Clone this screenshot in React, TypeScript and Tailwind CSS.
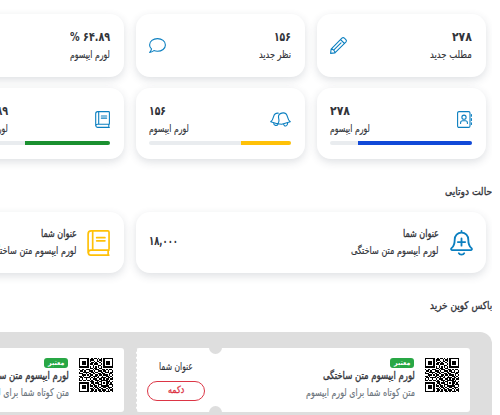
import { useLayoutEffect, useRef, useState, type ReactNode } from 'react';

type TextProps = { children: string; w: number; className: string; left?: boolean };

// A line of text condensed or widened to a known measure.
function Line({ children, w, className, left }: TextProps) {
  const ref = useRef<HTMLSpanElement>(null);
  const [scale, setScale] = useState(1);
  useLayoutEffect(() => {
    if (ref.current) setScale(w / ref.current.offsetWidth);
  }, [w]);
  return (
    <div className={`flex whitespace-nowrap ${left ? 'justify-end' : 'justify-start'} ${className}`} style={{ width: w }}>
      <span
        ref={ref}
        className={`shrink-0 ${left ? 'origin-left' : 'origin-right'}`}
        style={{ transform: `scaleX(${scale})` }}
      >
        {children}
      </span>
    </div>
  );
}

function Svg({ box, className, sw, children }: { box: string; className: string; sw: number; children: ReactNode }) {
  return (
    <svg viewBox={box} className={`shrink-0 ${className}`} fill="none" stroke="currentColor" strokeWidth={sw} strokeLinecap="round" strokeLinejoin="round">
      {children}
    </svg>
  );
}

const Pencil = () => (
  <Svg box="0 0 17 17" className="w-[17px] h-[17px]" sw={1.1}>
    <path d="M.6 16.400l.5-4.200L11.900 1.200a1.800 1.800 0 0 1 2.500 0l1.400 1.400a1.800 1.800 0 0 1 0 2.500L4.900 15.900zM10.600 2.600l3.900 3.900M1.100 12.200c1.800-.3 3.900 1.700 3.800 3.700M4.400 12.400l6.600-6.500" />
  </Svg>
);
const Comment = () => (
  <Svg box="0 0 17 15" className="w-[17px] h-[15px]" sw={1.1}>
    <path d="M8.500.6c4.400 0 7.900 2.700 7.900 6.300s-3.500 6.400-7.900 6.400c-1.300 0-2.500-.2-3.600-.7-1.300 1-2.700 1.700-4.200 1.800 1-1 1.600-2.200 1.800-3.500C1.300 9.800.6 8.400.6 6.900.6 3.300 4.100.6 8.500.6z" />
  </Svg>
);
const Contacts = () => (
  <Svg box="0 0 15 17" className="w-[15px] h-[17px]" sw={1.1}>
    <rect x=".6" y=".6" width="12.400" height="15.800" rx="1.400" />
    <circle cx="7" cy="6.200" r="2.100" />
    <path d="M3.600 12.500v-.8c0-1.200 1-2 2.100-2h2.600c1.100 0 2.100.8 2.100 2v.8M14.400 3.500v1.800M14.400 7.600v1.800M14.400 11.700v1.800" />
  </Svg>
);
const Bells = () => (
  <Svg box="0 0 21 15" className="w-[21px] h-[15px]" sw={1.1}>
    <path d="M8 12L.7 9.800C2.600 8.300 3 6.900 3.500 4.800 4.200 2.200 5.800.9 8.200 1.100M3.500 10.800c.2 2.900 3.600 3.600 4.500 1.200M11.700 12.200l8.600-2.400c-1.900-1.500-2.300-2.900-2.800-5C16.800 2.100 14.500.5 11.800 1.100 9.200 1.700 8.100 3.300 8.600 5.900c.3 2.100.9 3.200-.2 4.900-.3.400-.6.700-.9 1l4.200.4M13.600 12.200c.6 2.900 4.200 2.300 4-1.300" />
  </Svg>
);
const Book = ({ big }: { big?: boolean }) => (
  <Svg box="0 0 15 17" className={big ? 'w-[23px] h-[26px]' : 'w-[15px] h-[17px]'} sw={1.1}>
    <path d="M14.300 13.200H2.500a1.600 1.600 0 0 0 0 3.200h11.800M13.800 13.200v3.200M.7 14.800V2.700C.7 1.500 1.500.6 2.700.6h10.900c.4 0 .8.3.8.8v11.100c0 .4-.3.7-.8.7M3.700.6v12.600M6.300 5h5.400M6.300 7.100h5.400" />
  </Svg>
);
const BellPlus = () => (
  <Svg box="0 0 24 27" className="w-[23px] h-[26px]" sw={1.900}>
    <path d="M12 .9v1.700M12 2.700c-4.200 0-7.100 3.100-7.100 7.300 0 5-1 6.900-3.300 8.900-.9.900-.4 2.100.8 2.100h19.200c1.200 0 1.700-1.200.8-2.100-2.300-2-3.300-3.900-3.300-8.900 0-4.200-2.900-7.300-7.100-7.300zM12 8.700v7.600M8.200 12.500h7.600M9.200 24.200c.7 1.800 4.900 1.800 5.600 0" />
  </Svg>
);

const qrRows = [
  '1111111001011010101111111',
  '1000001011100101101000001',
  '1011101010010110101011101',
  '1011101001101001001011101',
  '1011101011011100101011101',
  '1000001000100011001000001',
  '1111111010101010101111111',
  '0000000011011001100000000',
  '1011011100101110011010110',
  '0110100111010011101101001',
  '1001111001101100110111011',
  '1110010110110011011000110',
  '0011101011001101101110101',
  '1101000110111010010011010',
  '0110111101010110111101101',
  '1010010010111001101011011',
  '1101101101001110111110100',
  '0000000011100101100011101',
  '1111111001101110101011010',
  '1000001010110011100010111',
  '1011101011011010111111001',
  '1011101000101101001101110',
  '1011101011010110110010101',
  '1000001001101011011101011',
  '1111111011011001101011101',
];
const qrPath = qrRows.map((r, y) => r.split('').map((c, x) => (c === '1' ? `M${x} ${y}h1v1h-1z` : '')).join('')).join('');

const card = 'shrink-0 rounded-[14px] bg-white shadow-[0_3px_9px_rgba(50,60,80,0.16)]';
const num = 'h-[18px] text-[12.5px] leading-[18px] font-bold';
const label = 'h-[17px] text-[10.5px] leading-[16px] [-webkit-text-stroke:0.15px_currentColor]';
const medium = '[-webkit-text-stroke:0.35px_currentColor]';

function Stat({ value, vw, text, tw, icon }: { value: string; vw: number; text: string; tw: number; icon: ReactNode }) {
  return (
    <div className={`${card} w-[169px] h-[63px] pl-[13px] pr-[14px] flex items-center justify-between`}>
      <div>
        <Line w={vw} className={num}>{value}</Line>
        <Line w={tw} className={label}>{text}</Line>
      </div>
      <div className="text-[#0b7fc0]">{icon}</div>
    </div>
  );
}

function Progress({ value, vw, icon, fill }: { value: string; vw: number; icon: ReactNode; fill: string }) {
  return (
    <div className={`${card} w-[169px] h-[71px] pt-[12px] pl-[13px] pr-[14px]`}>
      <div className="flex items-center justify-between h-[39px]">
        <div className="text-[#0b7fc0]">{icon}</div>
        <div className="flex flex-col items-end">
          <Line left w={vw} className={num}>{value}</Line>
          <Line left w={40} className={label}>لورم ایپسوم</Line>
        </div>
      </div>
      <div className="mt-[2px] h-[4px] rounded-full overflow-hidden bg-[#e9ecef]">
        <div className={`h-full ${fill}`} />
      </div>
    </div>
  );
}

function Wide({ icon, value }: { icon: ReactNode; value: string }) {
  return (
    <div className={`${card} w-[350px] h-[61px] pl-[13px] pr-[13px] flex items-center`}>
      {icon}
      <div className="mr-[10px] pb-[3px]">
        <Line w={36} className={`h-[18px] text-[10.5px] leading-[18px] ${medium}`}>عنوان شما</Line>
        <Line w={88} className="h-[17px] text-[10.5px] leading-[17px] [-webkit-text-stroke:0.2px_currentColor]">لورم ایپسوم متن ساختگی</Line>
      </div>
      <div className="mr-auto pb-[3px]">
        <Line left w={29} className="text-[12.5px] leading-[18px] font-bold">{value}</Line>
      </div>
    </div>
  );
}

function Coupon() {
  return (
    <div className="relative shrink-0 w-[334px] h-[64px] rounded-[3px] bg-white overflow-hidden flex border-l border-dashed border-[#dedede]">
      <svg viewBox="0 0 25 25" className="w-[34px] h-[34px] mt-[10px] mr-[11px] shrink-0 text-black" fill="currentColor" shapeRendering="crispEdges">
        <path d={qrPath} />
      </svg>
      <div className="mr-[10px] pt-[10px]">
        <div className="mr-[1px] w-[24px] h-[10px] rounded-[3px] bg-[#28a745] flex justify-center items-center text-white">
          <Line w={16} className="text-[7px] leading-[10px] font-bold">معتبر</Line>
        </div>
        <Line w={92} className={`h-[16px] text-[11px] leading-[16px] ${medium}`}>لورم ایپسوم متن ساختگی</Line>
        <Line w={109} className="h-[17px] text-[10.5px] leading-[16px] text-[#6c757d] [-webkit-text-stroke:0.15px_currentColor]">متن کوتاه شما برای لورم ایپسوم</Line>
      </div>
      <div className="mr-auto ml-[10px] w-[58px] flex flex-col items-center pt-[10px]">
        <Line w={34} className="h-[17px] text-[10.5px] leading-[16px] [-webkit-text-stroke:0.15px_currentColor]">عنوان شما</Line>
        <div className="mt-[6px] w-[58px] h-[20px] rounded-full border border-[#dc3545] text-[#dc3545] flex justify-center">
          <Line w={16} className={`text-[10px] leading-[16px] ${medium}`}>دکمه</Line>
        </div>
      </div>
      <div className="absolute left-[72px] top-[-7px] w-[13px] h-[13px] rounded-full bg-[#dedede]" />
      <div className="absolute left-[72px] bottom-[-7px] w-[13px] h-[13px] rounded-full bg-[#dedede]" />
    </div>
  );
}

export default function App() {
  return (
    <div className="w-[500px] h-[415px] overflow-hidden bg-white">
      <div dir="rtl" lang="fa" className="w-[492px] h-[415px] overflow-hidden text-[#32343a] font-['DejaVu_Sans',sans-serif]">
        <div className="flex gap-[12px] pt-[14px] pr-[6px]">
          <Stat value="۲۷۸" vw={20} text="مطلب جدید" tw={42} icon={<Pencil />} />
          <Stat value="۱۵۶" vw={17} text="نظر جدید" tw={32} icon={<Comment />} />
          <Stat value="۶۴.۸۹ %" vw={40} text="لورم ایپسوم" tw={40} icon={<Comment />} />
        </div>
        <div className="flex gap-[12px] pt-[11px] pr-[6px]">
          <Progress value="۲۷۸" vw={20} icon={<Contacts />} fill="bg-[#1149d8] w-[80%]" />
          <Progress value="۱۵۶" vw={17} icon={<Bells />} fill="bg-[#ffc107] w-[35%]" />
          <Progress value="۶۴.۸۹ %" vw={40} icon={<Book />} fill="bg-[#1a9030] w-[60%]" />
        </div>
        <div className="pt-[23px] h-[53px]">
          <Line w={47} className={`h-[18px] text-[10.5px] leading-[18px] ${medium}`}>حالت دوتایی</Line>
        </div>
        <div className="flex gap-[12px] pr-[6px]">
          <Wide icon={<div className="text-[#0b7fc0] ml-[1px]"><BellPlus /></div>} value="۱۸,۰۰۰" />
          <Wide icon={<div className="text-[#ffc107] mr-[1px]"><Book big /></div>} value="۱۸,۰۰۰" />
        </div>
        <div className="pt-[23px] h-[59px]">
          <Line w={62} className={`h-[18px] text-[10.5px] leading-[18px] ${medium}`}>باکس کوپن خرید</Line>
        </div>
        <div className="h-[83px] bg-[#dedede] rounded-tr-[12px] pt-[16px] pr-[22px] flex items-start gap-[12px]">
          <Coupon />
          <Coupon />
        </div>
      </div>
    </div>
  );
}
